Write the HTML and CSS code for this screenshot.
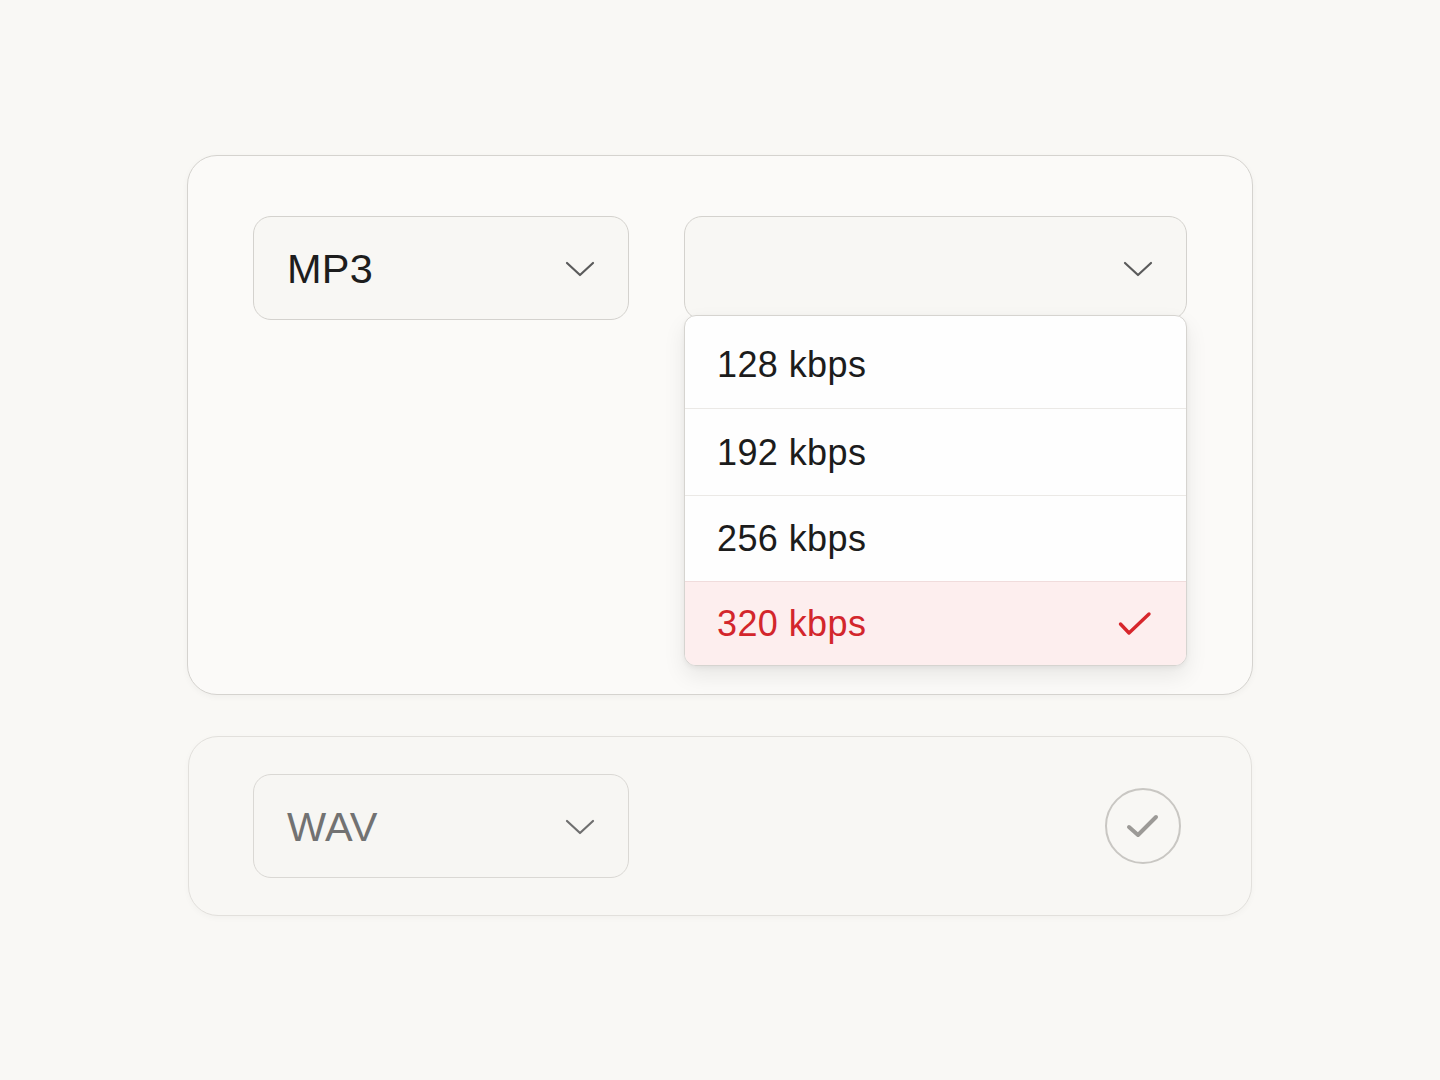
FILE: index.html
```html
<!DOCTYPE html>
<html lang="en">
<head>
<meta charset="utf-8">
<title>Export format</title>
<link rel="stylesheet" href="styles.css">
</head>
<body>
<main class="stage">
  <section class="card card-active">
    <div class="select select-format">
      <span class="select-value">MP3</span>
      <svg class="chevron" width="30" height="16" viewBox="0 0 30 16"><path d="M2 2 L15 14 L28 2" fill="none" stroke="#5b5b5b" stroke-width="2.2" stroke-linecap="round" stroke-linejoin="round"/></svg>
    </div>
    <div class="select-wrap">
      <div class="select select-bitrate">
        <span class="select-value"></span>
        <svg class="chevron" width="30" height="16" viewBox="0 0 30 16"><path d="M2 2 L15 14 L28 2" fill="none" stroke="#5b5b5b" stroke-width="2.2" stroke-linecap="round" stroke-linejoin="round"/></svg>
      </div>
      <ul class="menu">
        <li class="menu-item">128 kbps</li>
        <li class="menu-item">192 kbps</li>
        <li class="menu-item">256 kbps</li>
        <li class="menu-item is-selected">320 kbps
          <svg class="tick" width="34" height="26" viewBox="0 0 34 26"><path d="M2.5 13 L11 22 L31 3" fill="none" stroke="#d7262c" stroke-width="3.4" stroke-linecap="round" stroke-linejoin="round"/></svg>
        </li>
      </ul>
    </div>
  </section>
  <section class="card card-muted">
    <div class="select select-format select-muted">
      <span class="select-value">WAV</span>
      <svg class="chevron" width="30" height="16" viewBox="0 0 30 16"><path d="M2 2 L15 14 L28 2" fill="none" stroke="#6f6f6f" stroke-width="2.2" stroke-linecap="round" stroke-linejoin="round"/></svg>
    </div>
    <div class="done">
      <svg width="36" height="28" viewBox="0 0 36 28"><path d="M4 15 L13 23 L31 5" fill="none" stroke="#9c9a97" stroke-width="4" stroke-linecap="round" stroke-linejoin="round"/></svg>
    </div>
  </section>
</main>
</body>
</html>
```
FILE: styles.css
```css
* { box-sizing: border-box; }
html, body { margin: 0; padding: 0; }
body {
  background: #f9f8f5;
  font-family: "Liberation Sans", Arial, Helvetica, sans-serif;
  color: #1c1c1c;
  width: 1440px;
  height: 1080px;
  overflow: hidden;
}
.stage {
  display: flex;
  flex-direction: column;
  align-items: flex-start;
  padding: 155px 0 0 187px;
  gap: 41px;
}
.card {
  width: 1066px;
  border-radius: 30px;
  display: flex;
}
.card-active {
  height: 540px;
  background: #fbfaf8;
  border: 1.5px solid #d5d3cf;
  box-shadow: 0 2px 6px rgba(0,0,0,0.04);
  padding: 60px 64px 0 65px;
  align-items: flex-start;
  gap: 55px;
}
.card-muted {
  height: 180px;
  margin-left: 1px;
  width: 1064px;
  background: #f8f7f4;
  border: 1.5px solid #e2e0dc;
  box-shadow: 0 2px 6px rgba(0,0,0,0.03);
  padding: 0 70px 0 64px;
  align-items: center;
  justify-content: space-between;
}
.select {
  height: 104px;
  border: 1.5px solid #d4d2ce;
  border-radius: 18px;
  background: #f8f7f4;
  display: flex;
  align-items: center;
  justify-content: space-between;
  padding: 2px 33px 0 33px;
}
.select-format { width: 376px; }
.select-value {
  font-size: 41.5px;
  letter-spacing: 0.3px;
  color: #1d1d1d;
  margin-top: -1px;
}
.select-muted {
  border-color: #dad8d4;
  background: #f7f6f3;
}
.select-muted .select-value { color: #727272; }
.chevron { display: block; }
.select-wrap {
  position: relative;
  width: 503px;
}
.select-bitrate {
  width: 503px;
  padding-right: 33px;
}
.menu {
  position: absolute;
  left: 0;
  top: 99px;
  width: 503px;
  margin: 0;
  padding: 0;
  list-style: none;
  background: #fefefe;
  border: 1.5px solid #d6d4d0;
  border-radius: 12px;
  box-shadow: 0 10px 22px rgba(0,0,0,0.08), 0 2px 5px rgba(0,0,0,0.05);
  overflow: hidden;
}
.menu-item {
  height: 86.5px;
  display: flex;
  align-items: center;
  justify-content: space-between;
  padding: 2px 34px 0 32px;
  font-size: 36px;
  letter-spacing: 0.4px;
  color: #1c1c1c;
  border-top: 1.5px solid #ebe9e6;
}
.menu-item:first-child { border-top: none; height: 92px; padding-top: 6px; }
.menu-item.is-selected {
  background: #fdeeee;
  color: #d3262c;
  border-top-color: #f0dcdc;
  height: 84px;
  padding-top: 0;
}
.tick { display: block; }
.done {
  width: 76px;
  height: 76px;
  border-radius: 50%;
  border: 2px solid #c9c7c3;
  display: flex;
  align-items: center;
  justify-content: center;
}
```
